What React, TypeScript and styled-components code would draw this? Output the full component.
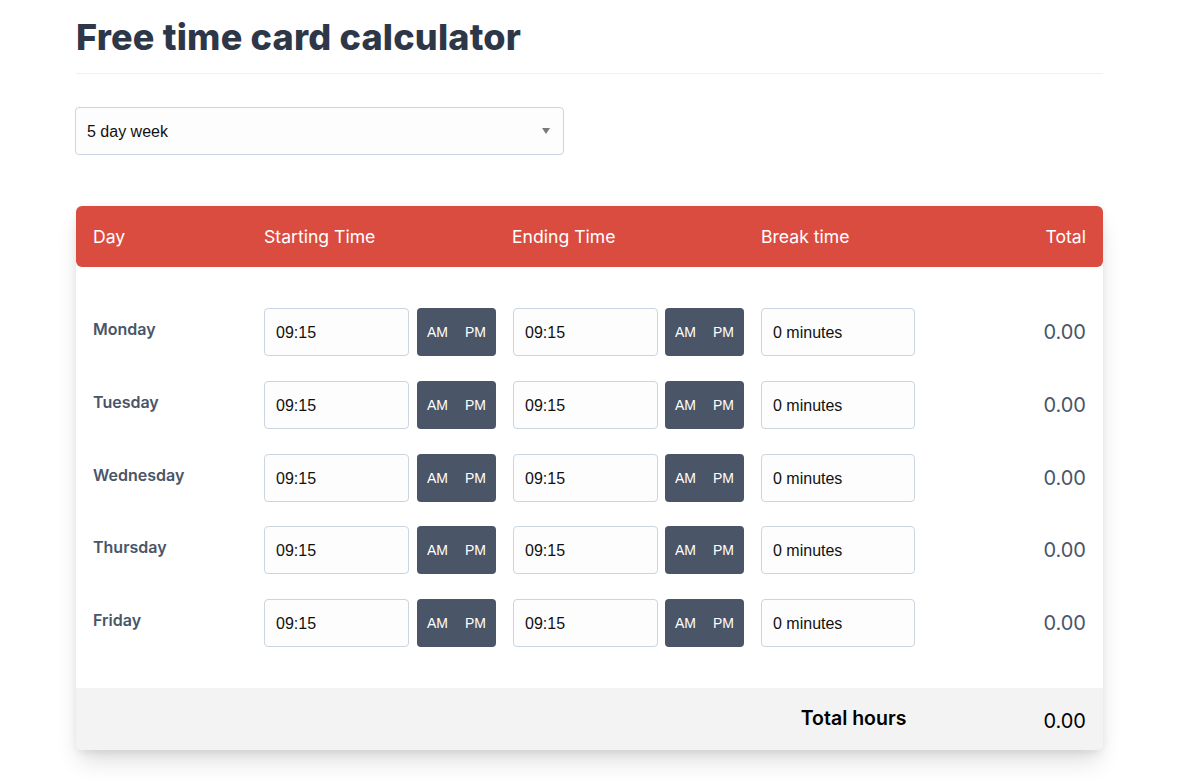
import React from "react";
import styled, { createGlobalStyle } from "styled-components";

const Global = createGlobalStyle`
  html, body { margin: 0; padding: 0; background: #ffffff; }
  body { font-family: Inter, "Noto Sans", sans-serif; color: #2d3748; }
  * { box-sizing: border-box; }
`;

const Page = styled.div`
  width: 1027px;
  margin-left: 76px;
  padding-top: 17px;
  padding-bottom: 40px;
`;

const Title = styled.h1`
  margin: 0;
  font-family: Inter, sans-serif;
  font-size: 36px;
  line-height: 40px;
  font-weight: 800;
  color: #2d3748;
  letter-spacing: 0.2px;
`;

const Rule = styled.hr`
  margin: 16px 0 0;
  border: 0;
  border-top: 1px solid #edf2f7;
`;

const SelectWrap = styled.div`
  position: relative;
  width: 489px;
  margin: 33px 0 0 -1px;
  &::after {
    content: "";
    position: absolute;
    right: 14px;
    top: 21px;
    border-left: 4px solid transparent;
    border-right: 4px solid transparent;
    border-top: 6px solid #7a7a7a;
    pointer-events: none;
  }
`;

const Select = styled.select`
  appearance: none;
  width: 100%;
  height: 48px;
  padding: 0 11px;
  border: 1px solid #cbd5e0;
  border-radius: 4px;
  background: #fdfdfd;
  font-family: "Liberation Sans", Arial, sans-serif;
  font-size: 16px;
  color: #111;
  outline: none;
`;

const Card = styled.div`
  margin-top: 51px;
  border-radius: 6px;
  background: #fff;
  box-shadow: 0 14px 24px -4px rgba(0, 0, 0, 0.14), 0 6px 10px -3px rgba(0, 0, 0, 0.06),
    0 0 10px rgba(0, 0, 0, 0.04);
`;

const cols = "171px 248px 249px 1fr auto";

const Header = styled.div`
  display: grid;
  grid-template-columns: ${cols};
  align-items: center;
  height: 61px;
  padding: 0 17px;
  background: #db4c40;
  border-radius: 6px;
  color: #fff;
  font-family: Inter, sans-serif;
  font-size: 17.6px;
  font-weight: 400;
`;

const HeadCell = styled.div<{ $right?: boolean }>`
  text-align: ${(p) => (p.$right ? "right" : "left")};
`;

const Body = styled.div`
  display: flex;
  flex-direction: column;
  gap: 24.75px;
  padding: 41px 17px 41px;
`;

const Row = styled.div`
  display: grid;
  grid-template-columns: ${cols};
  align-items: center;
  height: 48px;
`;

const DayLabel = styled.div`
  font-family: Inter, sans-serif;
  font-size: 16px;
  font-weight: 600;
  color: #4a5568;
  padding-bottom: 6px;
`;

const TimeGroup = styled.div<{ $gap?: number }>`
  display: flex;
  gap: ${(p) => p.$gap ?? 8}px;
`;

const TextInput = styled.input<{ $w: number; $shift?: number }>`
  width: ${(p) => p.$w}px;
  height: 48px;
  margin-left: ${(p) => p.$shift ?? 0}px;
  padding: 2px 11px 0;
  border: 1px solid #cbd5e0;
  border-radius: 4px;
  background: #fdfdfd;
  font-family: "Liberation Sans", Arial, sans-serif;
  font-size: 16px;
  color: #111;
  outline: none;
`;

const Toggle = styled.div`
  display: flex;
  align-items: center;
  gap: 17px;
  width: 79px;
  height: 48px;
  padding-left: 10px;
  border-radius: 4px;
  background: #4a5568;
  color: #fff;
  font-family: "Liberation Sans", Arial, sans-serif;
  font-size: 14px;
`;

const RowTotal = styled.div`
  text-align: right;
  font-family: Inter, sans-serif;
  font-size: 20px;
  color: #4a5568;
`;

const Footer = styled.div`
  display: flex;
  align-items: center;
  justify-content: flex-end;
  height: 62px;
  padding: 0 17px;
  background: #f3f3f3;
  border-radius: 0 0 6px 6px;
  color: #000;
`;

const FootLabel = styled.div`
  font-family: Inter, sans-serif;
  font-size: 19.5px;
  font-weight: 600;
  margin-right: 137px;
  padding-bottom: 3px;
`;

const FootValue = styled.div`
  font-family: Inter, sans-serif;
  font-size: 20px;
  padding-top: 3px;
`;

const days = ["Monday", "Tuesday", "Wednesday", "Thursday", "Friday"];

export default function App() {
  return (
    <>
      <Global />
      <Page>
        <Title>Free time card calculator</Title>
        <Rule />
        <SelectWrap>
          <Select defaultValue="5">
            <option value="5">5 day week</option>
            <option value="6">6 day week</option>
            <option value="7">7 day week</option>
          </Select>
        </SelectWrap>
        <Card>
          <Header>
            <HeadCell>Day</HeadCell>
            <HeadCell>Starting Time</HeadCell>
            <HeadCell>Ending Time</HeadCell>
            <HeadCell>Break time</HeadCell>
            <HeadCell $right>Total</HeadCell>
          </Header>
          <Body>
            {days.map((d) => (
              <Row key={d}>
                <DayLabel>{d}</DayLabel>
                <TimeGroup>
                  <TextInput $w={145} defaultValue="09:15" />
                  <Toggle>
                    <span>AM</span>
                    <span>PM</span>
                  </Toggle>
                </TimeGroup>
                <TimeGroup $gap={7}>
                  <TextInput $w={145} $shift={1} defaultValue="09:15" />
                  <Toggle>
                    <span>AM</span>
                    <span>PM</span>
                  </Toggle>
                </TimeGroup>
                <div>
                  <TextInput $w={154} defaultValue="0 minutes" />
                </div>
                <RowTotal>0.00</RowTotal>
              </Row>
            ))}
          </Body>
          <Footer>
            <FootLabel>Total hours</FootLabel>
            <FootValue>0.00</FootValue>
          </Footer>
        </Card>
      </Page>
    </>
  );
}
